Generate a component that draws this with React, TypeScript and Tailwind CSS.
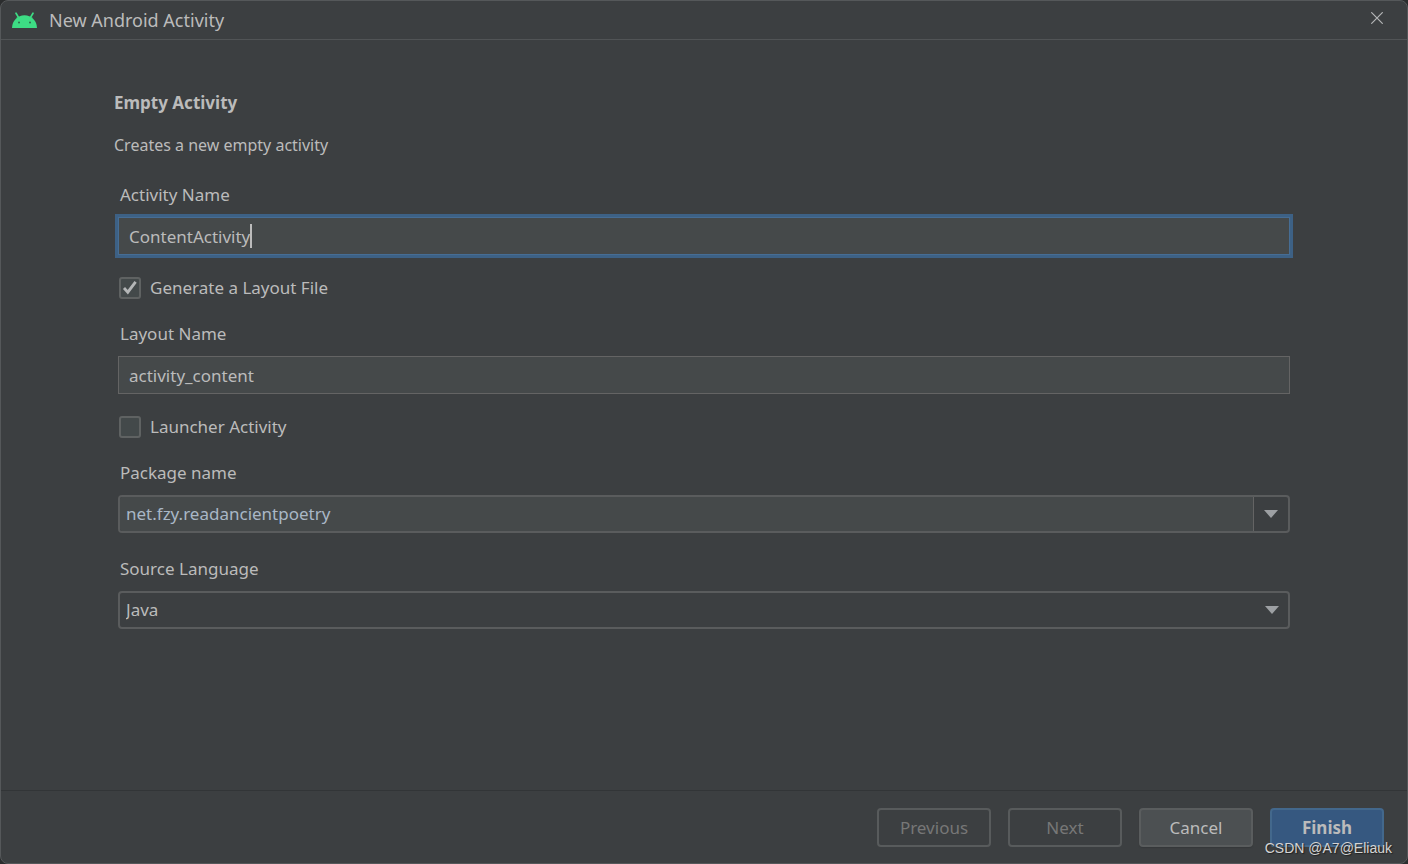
import { useId, useState } from 'react'
import type { ReactNode } from 'react'
import clsx from 'clsx'

const AndroidIcon = () => (
  <svg viewBox="0 0 25 16" className="h-4 w-[25px] shrink-0" aria-hidden="true">
    <path d="M0 16A12.500 12.700 0 0 1 25 16Z" fill="#3ddc84" />
    <path d="M4 1.200 6.600 5.600M21 1.200 18.400 5.600" stroke="#3ddc84" strokeWidth="1.700" strokeLinecap="round" />
    <circle cx="7" cy="10.600" r="1" fill="#2f6b4c" />
    <circle cx="18" cy="10.600" r="1" fill="#2f6b4c" />
  </svg>
)

const CloseIcon = () => (
  <svg viewBox="0 0 12 12" className="h-3 w-3" aria-hidden="true">
    <path d="M.3.3 11.700 11.700M11.700.3.3 11.700" stroke="#b4b6b7" strokeWidth="1.200" />
  </svg>
)

const ArrowDown = () => (
  <svg viewBox="0 0 14 8" className="h-2 w-3.5" aria-hidden="true">
    <path d="M0 0H14L7 8Z" fill="#9da0a3" />
  </svg>
)

const Field = ({ label, id, children }: { label: string; id: string; children: ReactNode }) => (
  <div className="flex flex-col gap-2.5 px-1">
    <label htmlFor={id} className="self-start pl-0.5">{label}</label>
    {children}
  </div>
)

const CheckRow = ({ label, initial }: { label: string; initial: boolean }) => {
  const [checked, setChecked] = useState(initial)

  return (
    <div className="mb-[22px] mt-[21px] flex pl-[5px]">
      <label className="flex items-center gap-[9px]">
        <span className="grid">
          <input
            type="checkbox"
            checked={checked}
            onChange={(e) => setChecked(e.target.checked)}
            className="col-start-1 row-start-1 h-[22px] w-[22px] appearance-none rounded-[3px] border-2 border-[#5f6262] bg-[#43494a]"
          />
          {checked && (
            <svg viewBox="0 0 22 22" className="pointer-events-none col-start-1 row-start-1 h-[22px] w-[22px]" aria-hidden="true">
              <path d="M5 11 8.800 15.200 16.600 4.800" fill="none" stroke="#b4b6b7" strokeWidth="2.800" />
            </svg>
          )}
        </span>
        {label}
      </label>
    </div>
  )
}

const BUTTON_STYLES = {
  plain: 'border-[#5a5d5e] bg-[#4c5052] text-[#bbbbbb] shadow-[0_1px_1px_#35383a]',
  primary: 'border-[#43688c] bg-[#365880] font-bold text-[#bbbbbb]',
  disabled: 'border-[#585b5c] text-[#777777]',
}

const BUTTONS: { label: string; kind: keyof typeof BUTTON_STYLES }[] = [
  { label: 'Previous', kind: 'disabled' },
  { label: 'Next', kind: 'disabled' },
  { label: 'Cancel', kind: 'plain' },
  { label: 'Finish', kind: 'primary' },
]

export default function App() {
  const id = useId()
  const [activityName, setActivityName] = useState('ContentActivity')
  const [layoutName, setLayoutName] = useState('activity_content')
  const [packageName, setPackageName] = useState('net.fzy.readancientpoetry')

  return (
    <div className="relative flex min-h-screen flex-col bg-[#2b2d2e] font-['Noto_Sans',sans-serif] text-[17px] leading-6 text-[#bbbbbb]">
      <div className="flex flex-1 flex-col rounded-lg border border-[#55585a] bg-[#3c3f41]">
        {/* Title bar */}
        <header className="flex h-[39px] items-center justify-between border-b border-[#515456] pl-[11px] pr-6">
          <div className="flex items-center gap-3">
            <AndroidIcon />
            <h1 className="text-lg leading-6">New Android Activity</h1>
          </div>
          <button type="button" aria-label="Close" className="self-start pt-[11px]">
            <CloseIcon />
          </button>
        </header>

        {/* Form */}
        <main className="flex flex-1 flex-col px-[113px] pt-[51px]">
          <h2 className="font-bold">Empty Activity</h2>
          <p className="mb-[26px] mt-[18px] text-base leading-6">Creates a new empty activity</p>

          <Field label="Activity Name" id={`${id}-activity`}>
            <div className="relative">
              <input
                id={`${id}-activity`}
                value={activityName}
                onChange={(e) => setActivityName(e.target.value)}
                className="block h-[38px] w-full border border-[#466d94] bg-[#45494a] px-2.5 caret-transparent outline-3 outline-[#3d6185]"
              />
              {/* Text cursor */}
              <div className="pointer-events-none absolute inset-y-0 left-[11px] flex items-center" aria-hidden="true">
                <span className="h-6 whitespace-pre border-r-2 border-[#bbbbbb] text-transparent">{activityName}</span>
              </div>
            </div>
          </Field>

          <CheckRow label="Generate a Layout File" initial />

          <Field label="Layout Name" id={`${id}-layout`}>
            <input
              id={`${id}-layout`}
              value={layoutName}
              onChange={(e) => setLayoutName(e.target.value)}
              className="h-[38px] w-full border border-[#646464] bg-[#45494a] px-2.5 outline-none"
            />
          </Field>

          <CheckRow label="Launcher Activity" initial={false} />

          <Field label="Package name" id={`${id}-package`}>
            <div className="flex h-[38px] overflow-hidden rounded border-2 border-[#5a5c5d]">
              <input
                id={`${id}-package`}
                value={packageName}
                onChange={(e) => setPackageName(e.target.value)}
                className="min-w-0 flex-1 bg-[#45494a] px-1.5 text-[#a9b7c6] outline-none"
              />
              <button
                type="button"
                aria-label="Show packages"
                className="flex w-[35px] items-center justify-center border-l border-[#646464]"
              >
                <ArrowDown />
              </button>
            </div>
          </Field>

          <div className="mt-6">
            <Field label="Source Language" id={`${id}-language`}>
              <div className="relative">
                <select
                  id={`${id}-language`}
                  defaultValue="Java"
                  className="block h-[38px] w-full appearance-none rounded border-2 border-[#5a5c5d] bg-[#3c3f41] px-1.5 outline-none"
                >
                  <option>Java</option>
                  <option>Kotlin</option>
                </select>
                <span className="pointer-events-none absolute inset-y-0 right-[11px] flex items-center">
                  <ArrowDown />
                </span>
              </div>
            </Field>
          </div>
        </main>

        <footer className="flex justify-end gap-[17px] border-t border-[#323537] pb-4 pr-[23px] pt-[17px]">
          {BUTTONS.map(({ label, kind }) => (
            <button
              key={label}
              type="button"
              disabled={kind === 'disabled'}
              className={clsx('h-[39px] w-[114px] rounded border-2', BUTTON_STYLES[kind])}
            >
              {label}
            </button>
          ))}
        </footer>
      </div>

      <span className="absolute bottom-1.5 right-4 font-['Liberation_Sans',sans-serif] text-sm leading-5 text-[#d4d4d4] [text-shadow:1px_1px_1px_#222]">
        CSDN @A7@Eliauk
      </span>
    </div>
  )
}
